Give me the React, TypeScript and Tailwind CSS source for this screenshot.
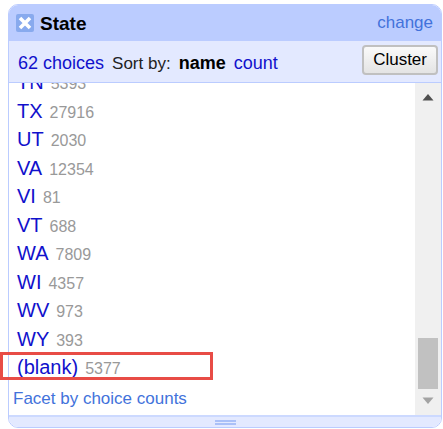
const choices = [
  { name: "TN", count: 5393 },
  { name: "TX", count: 27916 },
  { name: "UT", count: 2030 },
  { name: "VA", count: 12354 },
  { name: "VI", count: 81 },
  { name: "VT", count: 688 },
  { name: "WA", count: 7809 },
  { name: "WI", count: 4357 },
  { name: "WV", count: 973 },
  { name: "WY", count: 393 },
  { name: "(blank)", count: 5377 },
];

function Header() {
  return (
    <header className="flex h-[36px] items-center rounded-t-[9px] bg-[#bbccff] pr-2 pl-[7px]">
      <button type="button" aria-label="Remove facet" className="mr-[6px] size-[18px] rounded-[2px] bg-[#88aaee]">
        <svg viewBox="0 0 18 18" className="size-full">
          <path d="M4 4L14 14M14 4L4 14" stroke="#fff" strokeWidth="3.6" />
        </svg>
      </button>
      <h1 className="pt-[2px] text-[19px] leading-6 font-bold text-black">State</h1>
      <a href="#change" className="ml-auto text-[17px] leading-6 text-[#4272db]">
        change
      </a>
    </header>
  );
}

function SortBar() {
  return (
    <div className="flex h-[42px] items-start border-b border-[#bbccff] bg-[#e3e9ff] pt-1 pr-[3px] pl-[9px] leading-6">
      <div className="flex items-baseline gap-2 pt-[6px] text-[18px]">
        <a href="#choices" className="text-[#1111cc]">62 choices</a>
        <span className="text-[17px] text-[#222]">Sort by:</span>
        <a href="#name" className="font-bold text-black">name</a>
        <a href="#count" className="text-[#1111cc]">count</a>
      </div>
      <button
        type="button"
        className="ml-auto h-[30px] rounded-[4px] border-2 border-[#c0c0c0] bg-linear-to-b from-[#fafafa] to-[#e4e4e4] px-[9px] text-[17px] text-black"
      >
        Cluster
      </button>
    </div>
  );
}

function ScrollBar() {
  return (
    <div aria-hidden="true" className="flex w-[26px] flex-col items-center bg-[#f0f0f0] py-[10px]">
      <svg viewBox="0 0 12 8" className="h-[8px] w-[12px]">
        <path d="M6 1L11.500 7.500H.5Z" fill="#505050" />
      </svg>
      <div className="mt-auto h-[51px] w-5 bg-[#c1c1c1]" />
      <svg viewBox="0 0 12 8" className="mt-[8px] h-[8px] w-[12px]">
        <path d="M6 7L11.500 .5H.5Z" fill="#a3a3a3" />
      </svg>
    </div>
  );
}

export default function App() {
  return (
    <main className="bg-white pt-1 pl-2 pr-px font-['Liberation_Sans',Arial,sans-serif]">
      <section className="rounded-[10px] border border-[#bbccff] bg-white">
        <Header />
        <SortBar />
        <div className="flex h-[334px] border-b-2 border-[#ccd9ff]">
          <div className="flex min-w-0 flex-1 flex-col justify-end overflow-x-visible overflow-y-clip">
            <ul className="grid h-[314px] shrink-0 auto-rows-fr">
              {choices.map(({ name, count }) => (
                <li key={name} className="relative flex items-baseline gap-[7px] pl-2 leading-7">
                  <a href="#choice" className="text-[20px] text-[#1111cc]">{name}</a>
                  <span className="text-[16px] text-[#999]">{count}</span>
                  {name === "(blank)" && (
                    <div className="absolute -top-px -left-[9px] h-7 w-[213px] border-[3px] border-[#e84c46]" />
                  )}
                </li>
              ))}
            </ul>
            <a href="#facet" className="flex h-[33px] shrink-0 items-center pl-1 text-[17px] leading-6 text-[#4272db]">
              Facet by choice counts
            </a>
          </div>
          <ScrollBar />
        </div>
        <div className="flex h-[10px] items-center justify-center rounded-b-[9px] bg-[#e3e9ff]">
          <div className="h-[5px] w-[21px] border-y-2 border-[#aac0f8]" />
        </div>
      </section>
    </main>
  );
}
